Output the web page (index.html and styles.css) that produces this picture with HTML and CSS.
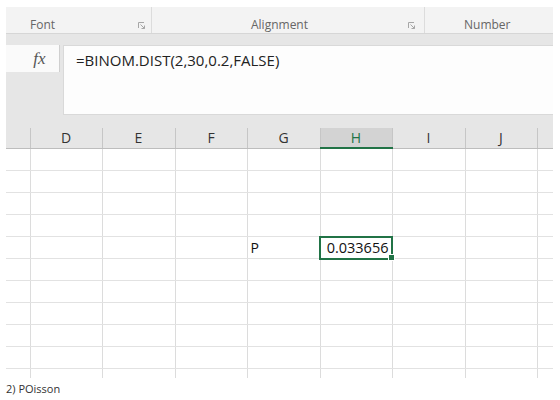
FILE: index.html
```html
<!DOCTYPE html>
<html lang="en">
<head>
  <meta charset="UTF-8">
  <meta name="viewport" content="width=device-width, initial-scale=1.0">
  <title>Binomial distribution in Excel</title>
  <link rel="stylesheet" href="styles.css">
</head>
<body>
  <div class="shot">
    <div class="ribbon">
      <div class="group group-font">
        <span class="group-label">Font</span>
        <svg class="launcher" width="7" height="7" viewBox="0 0 7 7"><path d="M0.5 6V0.5H6" fill="none" stroke="#a6a6a6"/><path d="M2.5 2.5L6.5 6.5M6.5 3.5V6.5H3.5" fill="none" stroke="#a6a6a6"/></svg>
      </div>
      <div class="group group-align">
        <span class="group-label">Alignment</span>
        <svg class="launcher" width="7" height="7" viewBox="0 0 7 7"><path d="M0.5 6V0.5H6" fill="none" stroke="#a6a6a6"/><path d="M2.5 2.5L6.5 6.5M6.5 3.5V6.5H3.5" fill="none" stroke="#a6a6a6"/></svg>
      </div>
      <div class="group group-number">
        <span class="group-label">Number</span>
      </div>
    </div>

    <div class="formula-bar">
      <div class="name-box"><span class="fx">fx</span></div>
      <div class="formula-input">=BINOM.DIST(2,30,0.2,FALSE)</div>
    </div>

    <table class="sheet">
      <colgroup>
        <col class="c-row"><col class="c-a"><col class="c-b"><col class="c-a"><col class="c-b"><col class="c-a"><col class="c-b"><col class="c-a"><col class="c-end">
      </colgroup>
      <thead>
        <tr>
          <th></th><th>D</th><th>E</th><th>F</th><th>G</th><th class="active">H</th><th>I</th><th>J</th><th></th>
        </tr>
      </thead>
      <tbody>
        <tr><td></td><td></td><td></td><td></td><td></td><td></td><td></td><td></td><td></td></tr>
        <tr><td></td><td></td><td></td><td></td><td></td><td></td><td></td><td></td><td></td></tr>
        <tr><td></td><td></td><td></td><td></td><td></td><td></td><td></td><td></td><td></td></tr>
        <tr><td></td><td></td><td></td><td></td><td></td><td></td><td></td><td></td><td></td></tr>
        <tr><td></td><td></td><td></td><td></td><td>P</td><td class="selected">0.033656</td><td></td><td></td><td></td></tr>
        <tr><td></td><td></td><td></td><td></td><td></td><td></td><td></td><td></td><td></td></tr>
        <tr><td></td><td></td><td></td><td></td><td></td><td></td><td></td><td></td><td></td></tr>
        <tr><td></td><td></td><td></td><td></td><td></td><td></td><td></td><td></td><td></td></tr>
        <tr><td></td><td></td><td></td><td></td><td></td><td></td><td></td><td></td><td></td></tr>
        <tr><td></td><td></td><td></td><td></td><td></td><td></td><td></td><td></td><td></td></tr>
        <tr class="cut"><td></td><td></td><td></td><td></td><td></td><td></td><td></td><td></td><td></td></tr>
      </tbody>
    </table>
  </div>

  <p class="caption">2) POisson</p>
</body>
</html>
```

FILE: styles.css
```css
body {
  margin: 0;
  background-color: #fff;
  font-family: "Open Sans", Arial, sans-serif;
  color: #222;
}

.shot {
  width: 547px;
  margin-left: 6px;
  padding-top: 7px;
}

/* ribbon group labels */
.ribbon {
  display: flex;
  height: 26px;
  background-color: #f3f3f3;
  border-bottom: 1px solid #d6d6d6;
}

.group {
  position: relative;
  display: flex;
  align-items: flex-start;
  padding-top: 10px;
  box-sizing: border-box;
}

.group-label {
  font-size: 12px;
  line-height: 16px;
  color: #666;
}

.group-font {
  width: 146px;
  padding-left: 24px;
  border-right: 1px solid #dcdcdc;
}

.group-align {
  width: 273px;
  padding-left: 99px;
  border-right: 1px solid #dcdcdc;
}

.group-number {
  flex: 1;
  padding-left: 39px;
}

.launcher {
  position: absolute;
  bottom: 4px;
}

.group-font .launcher { right: 6px; }
.group-align .launcher { right: 9px; }

/* formula bar */
.formula-bar {
  display: flex;
  align-items: flex-start;
  gap: 3px;
  background-color: #e6e6e6;
  padding: 11px 0 13px;
}

.name-box {
  width: 53px;
  height: 27px;
  background-color: #fafafa;
  border-right: 1px solid #cfcfcf;
  display: flex;
  align-items: center;
  justify-content: center;
}

.fx {
  font-family: "Liberation Serif", "DejaVu Serif", serif;
  font-style: italic;
  font-size: 17px;
  color: #555;
  padding-left: 14px;
}

.formula-input {
  flex: 1;
  height: 62px;
  background-color: #fdfdfd;
  border: 1px solid #d9d9d9;
  border-right: none;
  padding: 4px 12px 2px;
  font-size: 15px;
  line-height: 20px;
  color: #222;
}

/* grid */
.sheet {
  width: 547px;
  table-layout: fixed;
  border-collapse: collapse;
  font-size: 14px;
}

.c-row { width: 24px; }
.c-a { width: 72px; }
.c-b { width: 73px; }
.c-end { width: 16px; }

.sheet th {
  height: 19px;
  padding: 0;
  background-color: #e6e6e6;
  border-right: 1px solid #c6c6c6;
  border-bottom: 1px solid #bdbdbd;
  font-weight: normal;
  color: #333;
  line-height: 19px;
}

.sheet th:last-child {
  border-right: none;
}

.sheet th.active {
  background-color: #d3d3d3;
  color: #217346;
  border-bottom: 2px solid #217346;
}

.sheet td {
  height: 21px;
  padding: 0 3px;
  border-right: 1px solid #dcdcdc;
  border-bottom: 1px solid #e2e2e2;
  line-height: 20px;
  color: #111;
}

.sheet td:last-child {
  border-right: none;
}

.sheet tr.cut td {
  height: 9px;
  border-bottom: none;
}

.sheet td.selected {
  position: relative;
  text-align: right;
  outline: 2px solid #217346;
  outline-offset: -1px;
  font-size: 14.5px;
}

.sheet td.selected::after {
  content: "";
  position: absolute;
  right: -3px;
  bottom: -3px;
  width: 5px;
  height: 5px;
  background-color: #217346;
  border: 1px solid #fff;
}

.caption {
  margin: 3px 0 0 6px;
  font-size: 11px;
  color: #333;
}
```
